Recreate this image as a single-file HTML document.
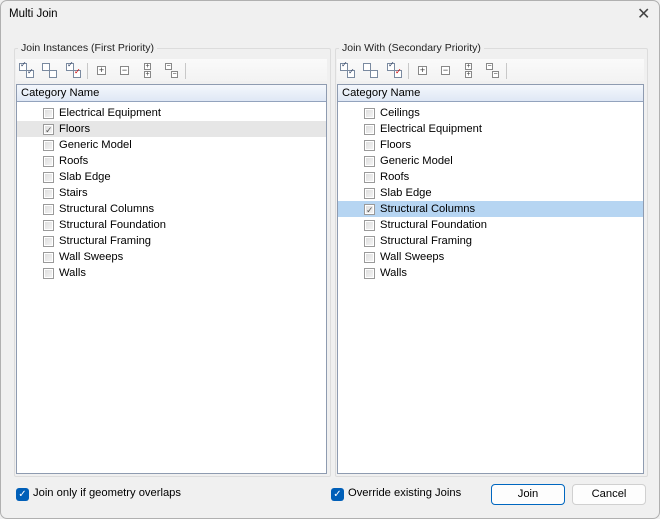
<!DOCTYPE html><html><head><style>
*{margin:0;padding:0;box-sizing:border-box}
body{width:660px;height:519px;background:#f0f0f0;font-family:"Liberation Sans",sans-serif;font-size:11px;color:#000;position:relative;overflow:hidden}
.a{position:absolute}
.grp{position:absolute;border:1px solid #dcdcdc;border-radius:2px}
.leg{position:absolute;background:#f0f0f0;padding:0 3px;font-size:10.5px;color:#222}
.tb{position:absolute;height:22px;background:linear-gradient(#fafafa,#f3f3f3)}
.list{position:absolute;background:#fff;border:1px solid #8e9bb0}
.hdr{height:17px;background:linear-gradient(#f4f7fc,#dfe8f5);border-bottom:1px solid #93a3bd;padding-left:4px;line-height:16px;font-size:11.2px}
.row{position:absolute;left:0;right:0;height:16px;line-height:16px;font-size:11.2px}
.cb{position:absolute;top:3px;width:11px;height:11px;border:1px solid #9a9a9a;background:linear-gradient(135deg,#dcdcdc,#f6f6f6);box-shadow:inset 0 0 0 1px #fff}
.cb.on::after{content:"✓";position:absolute;left:1px;top:-3px;font-size:9px;color:#555}
.txt{position:absolute}
.ic{position:absolute;width:8px;height:8px;border:1px solid #7a8aa0;background:#fff}
.ic.c::after{content:"✓";position:absolute;left:0;top:-4px;font-size:8px;color:#346}
.ic.r::after{content:"✓";position:absolute;left:0;top:-4px;font-size:8px;color:#c00}
.pm{position:absolute;width:9px;height:9px;border:1px solid #888;background:#fff;font-size:9px;line-height:7px;text-align:center;color:#333}
.sep{position:absolute;width:1px;height:16px;background:#c8c8c8}
.bcb{position:absolute;width:13px;height:13px;border-radius:3px;background:#005fb8;color:#fff;font-size:10px;line-height:13px;text-align:center}
.btn{position:absolute;height:21px;border:1px solid #d0d0d0;border-radius:4px;background:#fdfdfd;text-align:center;line-height:19px;font-size:11.2px}
</style></head><body>
<div class="a" style="left:0;top:0;width:660px;height:519px;border:1px solid #b0b0b0;border-radius:7px"></div>
<div class="a" style="left:9px;top:8px;font-size:11.5px">Multi Join</div>
<div class="a" style="left:637px;top:4px;font-size:16px;color:#444;font-weight:300">✕</div>

<div class="grp" style="left:14px;top:48px;width:317px;height:429px"></div>
<div class="leg" style="left:18px;top:42px">Join Instances (First Priority)</div>
<div class="grp" style="left:335px;top:48px;width:313px;height:429px"></div>
<div class="leg" style="left:339px;top:42px">Join With (Secondary Priority)</div>

<div id="L"></div>
<div class="bcb" style="left:16px;top:488px">✓</div>
<div class="a" style="left:33px;top:487px;font-size:11.2px">Join only if geometry overlaps</div>
<div class="bcb" style="left:331px;top:488px">✓</div>
<div class="a" style="left:348px;top:487px;font-size:11.2px">Override existing Joins</div>
<div class="btn" style="left:491px;top:484px;width:74px;border-color:#0067c0">Join</div>
<div class="btn" style="left:572px;top:484px;width:74px">Cancel</div>

<script>
function panel(x,w,items,sel,selColor){
 let h='';
 h+=`<div class="tb" style="left:${x}px;top:59px;width:${w}px"></div>`;
 const ix=x+3;
 h+=`<div class="ic c" style="left:${ix}px;top:63px"></div><div class="ic c" style="left:${ix+7}px;top:70px"></div>`;
 h+=`<div class="ic" style="left:${ix+23}px;top:63px"></div><div class="ic" style="left:${ix+30}px;top:70px"></div>`;
 h+=`<div class="ic c" style="left:${ix+47}px;top:63px"></div><div class="ic r" style="left:${ix+54}px;top:70px"></div>`;
 h+=`<div class="sep" style="left:${ix+68}px;top:63px"></div>`;
 h+=`<div class="pm" style="left:${ix+78}px;top:66px">+</div>`;
 h+=`<div class="pm" style="left:${ix+101}px;top:66px">−</div>`;
 h+=`<div class="pm" style="left:${ix+125}px;top:63px;width:7px;height:7px;font-size:7px;line-height:5px">+</div><div class="pm" style="left:${ix+125}px;top:71px;width:7px;height:7px;font-size:7px;line-height:5px">+</div>`;
 h+=`<div class="pm" style="left:${ix+146}px;top:63px;width:7px;height:7px;font-size:7px;line-height:5px">−</div><div class="pm" style="left:${ix+152}px;top:71px;width:7px;height:7px;font-size:7px;line-height:5px">−</div>`;
 h+=`<div class="sep" style="left:${ix+166}px;top:63px"></div>`;
 h+=`<div class="list" style="left:${x}px;top:84px;width:${w}px;height:390px"><div class="hdr">Category Name</div>`;
 items.forEach((t,i)=>{
  const bg=i===sel?`background:${selColor};`:'';
  h+=`<div class="row" style="${bg}top:${20+16*i}px"><div class="cb${i===sel?' on':''}" style="left:26px"></div><div class="txt" style="left:42px">${t}</div></div>`;
 });
 h+='</div>';
 return h;
}
document.getElementById('L').innerHTML=
 panel(16,311,["Electrical Equipment","Floors","Generic Model","Roofs","Slab Edge","Stairs","Structural Columns","Structural Foundation","Structural Framing","Wall Sweeps","Walls"],1,'#e6e6e6')+
 panel(337,307,["Ceilings","Electrical Equipment","Floors","Generic Model","Roofs","Slab Edge","Structural Columns","Structural Foundation","Structural Framing","Wall Sweeps","Walls"],6,'#b6d5f2');
</script>
</body></html>
